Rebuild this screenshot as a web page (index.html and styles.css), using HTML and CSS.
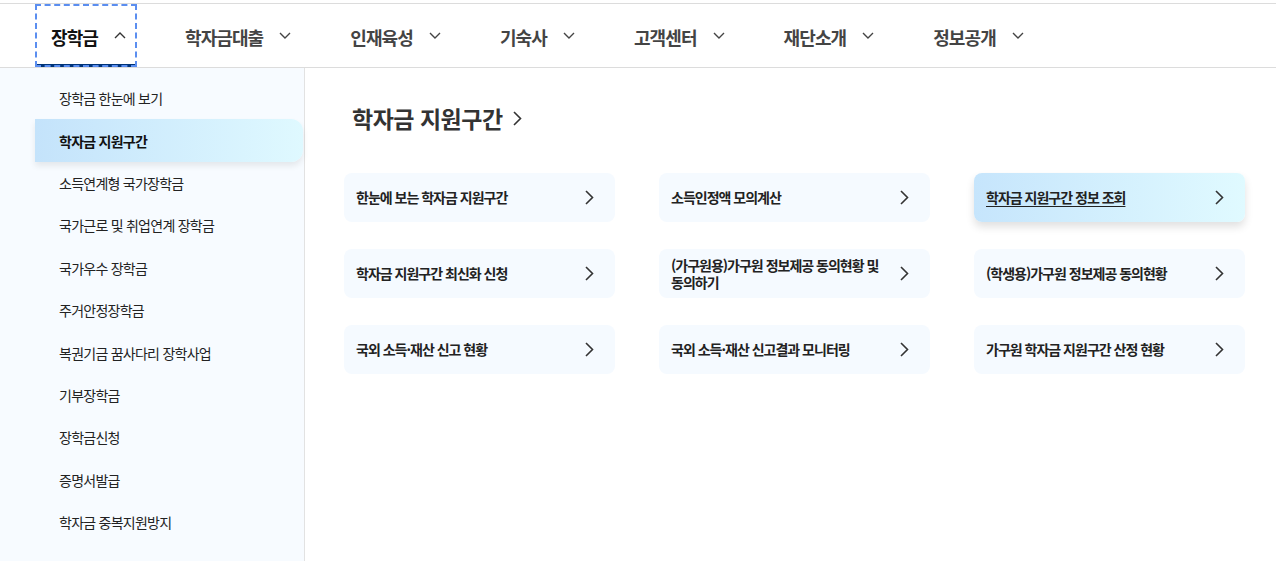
FILE: index.html
```html
<!DOCTYPE html>
<html lang="ko">
<head>
<meta charset="utf-8">
<title>장학금 - 학자금 지원구간</title>
<link rel="stylesheet" href="styles.css">
</head>
<body>
<header class="gnb">
  <ul class="gnb-list">
    <li class="gnb-item is-active"><span>장학금</span><svg class="caret" viewBox="0 0 12 7"><path d="M1 6 L6 1 L11 6"/></svg></li>
    <li class="gnb-item"><span>학자금대출</span><svg class="caret" viewBox="0 0 12 7"><path d="M1 1 L6 6 L11 1"/></svg></li>
    <li class="gnb-item"><span>인재육성</span><svg class="caret" viewBox="0 0 12 7"><path d="M1 1 L6 6 L11 1"/></svg></li>
    <li class="gnb-item"><span>기숙사</span><svg class="caret" viewBox="0 0 12 7"><path d="M1 1 L6 6 L11 1"/></svg></li>
    <li class="gnb-item"><span>고객센터</span><svg class="caret" viewBox="0 0 12 7"><path d="M1 1 L6 6 L11 1"/></svg></li>
    <li class="gnb-item"><span>재단소개</span><svg class="caret" viewBox="0 0 12 7"><path d="M1 1 L6 6 L11 1"/></svg></li>
    <li class="gnb-item"><span>정보공개</span><svg class="caret" viewBox="0 0 12 7"><path d="M1 1 L6 6 L11 1"/></svg></li>
  </ul>
</header>
<div class="panel">
  <nav class="side">
    <ul class="side-list">
      <li class="side-item">장학금 한눈에 보기</li>
      <li class="side-item is-active">학자금 지원구간</li>
      <li class="side-item">소득연계형 국가장학금</li>
      <li class="side-item">국가근로 및 취업연계 장학금</li>
      <li class="side-item">국가우수 장학금</li>
      <li class="side-item">주거안정장학금</li>
      <li class="side-item">복권기금 꿈사다리 장학사업</li>
      <li class="side-item">기부장학금</li>
      <li class="side-item">장학금신청</li>
      <li class="side-item">증명서발급</li>
      <li class="side-item">학자금 중복지원방지</li>
    </ul>
  </nav>
  <main class="content">
    <h2 class="title">학자금 지원구간<svg class="title-arrow" viewBox="0 0 9 15"><path d="M1 1 L7.5 7.5 L1 14"/></svg></h2>
    <div class="cards">
      <a class="card"><span>한눈에 보는 학자금 지원구간</span><svg class="arrow" viewBox="0 0 9 15"><path d="M1 1 L7.5 7.5 L1 14"/></svg></a>
      <a class="card"><span>소득인정액 모의계산</span><svg class="arrow" viewBox="0 0 9 15"><path d="M1 1 L7.5 7.5 L1 14"/></svg></a>
      <a class="card is-active"><span>학자금 지원구간 정보 조회</span><svg class="arrow" viewBox="0 0 9 15"><path d="M1 1 L7.5 7.5 L1 14"/></svg></a>
      <a class="card"><span>학자금 지원구간 최신화 신청</span><svg class="arrow" viewBox="0 0 9 15"><path d="M1 1 L7.5 7.5 L1 14"/></svg></a>
      <a class="card"><span>(가구원용)가구원 정보제공 동의현황 및 동의하기</span><svg class="arrow" viewBox="0 0 9 15"><path d="M1 1 L7.5 7.5 L1 14"/></svg></a>
      <a class="card"><span>(학생용)가구원 정보제공 동의현황</span><svg class="arrow" viewBox="0 0 9 15"><path d="M1 1 L7.5 7.5 L1 14"/></svg></a>
      <a class="card"><span>국외 소득·재산 신고 현황</span><svg class="arrow" viewBox="0 0 9 15"><path d="M1 1 L7.5 7.5 L1 14"/></svg></a>
      <a class="card"><span>국외 소득·재산 신고결과 모니터링</span><svg class="arrow" viewBox="0 0 9 15"><path d="M1 1 L7.5 7.5 L1 14"/></svg></a>
      <a class="card"><span>가구원 학자금 지원구간 산정 현황</span><svg class="arrow" viewBox="0 0 9 15"><path d="M1 1 L7.5 7.5 L1 14"/></svg></a>
    </div>
  </main>
</div>
</body>
</html>
```

FILE: styles.css
```css
* { box-sizing: border-box; }
html, body { margin: 0; padding: 0; background: #fff; }
body {
  font-family: "Noto Sans CJK KR", "Noto Sans", sans-serif;
  color: #222;
  height: 561px;
  overflow: hidden;
}
ul { list-style: none; margin: 0; padding: 0; }

.gnb {
  margin-top: 3px;
  border-top: 1px solid #dcdcdc;
  border-bottom: 1px solid #dcdcdc;
  height: 65px;
}
.gnb-list {
  display: flex;
  gap: 32px;
  padding-left: 35px;
  height: 63px;
}
.gnb-item {
  display: flex;
  align-items: center;
  gap: 16px;
  padding: 0 11px 0 16px;
  height: 63px;
  font-size: 18px;
  font-weight: 700;
  letter-spacing: -0.9px;
  color: #444;
}
.gnb-item span { padding-top: 2px; }
.gnb-item.is-active {
  color: #111;
  outline: 2px dashed #5b8ef0;
  outline-offset: -2px;
  border-bottom: 3px solid #003377;
  padding-top: 3px;
}
.caret {
  width: 12px;
  height: 7px;
  fill: none;
  stroke: #444;
  stroke-width: 1.4;
}
.is-active .caret { stroke: #333; }

.panel {
  display: flex;
  height: 493px;
}
.side {
  width: 305px;
  flex: none;
  background: #f7fbff;
  border-right: 1px solid #e2e2e2;
  padding-top: 9px;
}
.side-list { padding-left: 35px; }
.side-item {
  height: 42.4px;
  display: flex;
  align-items: center;
  padding-left: 24px;
  font-size: 14px;
  letter-spacing: -0.75px;
  color: #222;
}
.side-item.is-active {
  font-weight: 700;
  color: #111;
  background: linear-gradient(90deg, #c4e3fb 0%, #dff9ff 100%);
  border-radius: 0 12px 12px 0;
  box-shadow: 0 4px 6px rgba(0, 0, 0, 0.08);
  margin-right: 1px;
}

.content {
  flex: 1;
  padding: 33px 0 0 39px;
}
.title {
  margin: 0 0 38px 8px;
  font-size: 23px;
  font-weight: 700;
  letter-spacing: -0.5px;
  color: #333;
  display: flex;
  align-items: center;
  height: 34px;
}
.title-arrow {
  width: 9px;
  height: 15px;
  margin-left: 10px;
  fill: none;
  stroke: #333;
  stroke-width: 1.6;
}
.cards {
  display: grid;
  grid-template-columns: repeat(3, 271px);
  grid-auto-rows: 49px;
  column-gap: 44px;
  row-gap: 27px;
}
.card {
  display: flex;
  align-items: center;
  justify-content: space-between;
  padding: 0 21px 0 12px;
  background: #f5faff;
  border-radius: 8px;
  font-size: 14px;
  font-weight: 700;
  letter-spacing: -1px;
  line-height: 17px;
  color: #222;
}
.card span { max-width: 215px; }
.card.is-active {
  background: linear-gradient(90deg, #c6e5fc 0%, #e0faff 100%);
  box-shadow: 0 5px 8px rgba(0, 0, 0, 0.12);
}
.card.is-active span { text-decoration: underline; text-underline-offset: 3px; }
.arrow {
  width: 9px;
  height: 15px;
  flex: none;
  fill: none;
  stroke: #333;
  stroke-width: 1.6;
}
```
